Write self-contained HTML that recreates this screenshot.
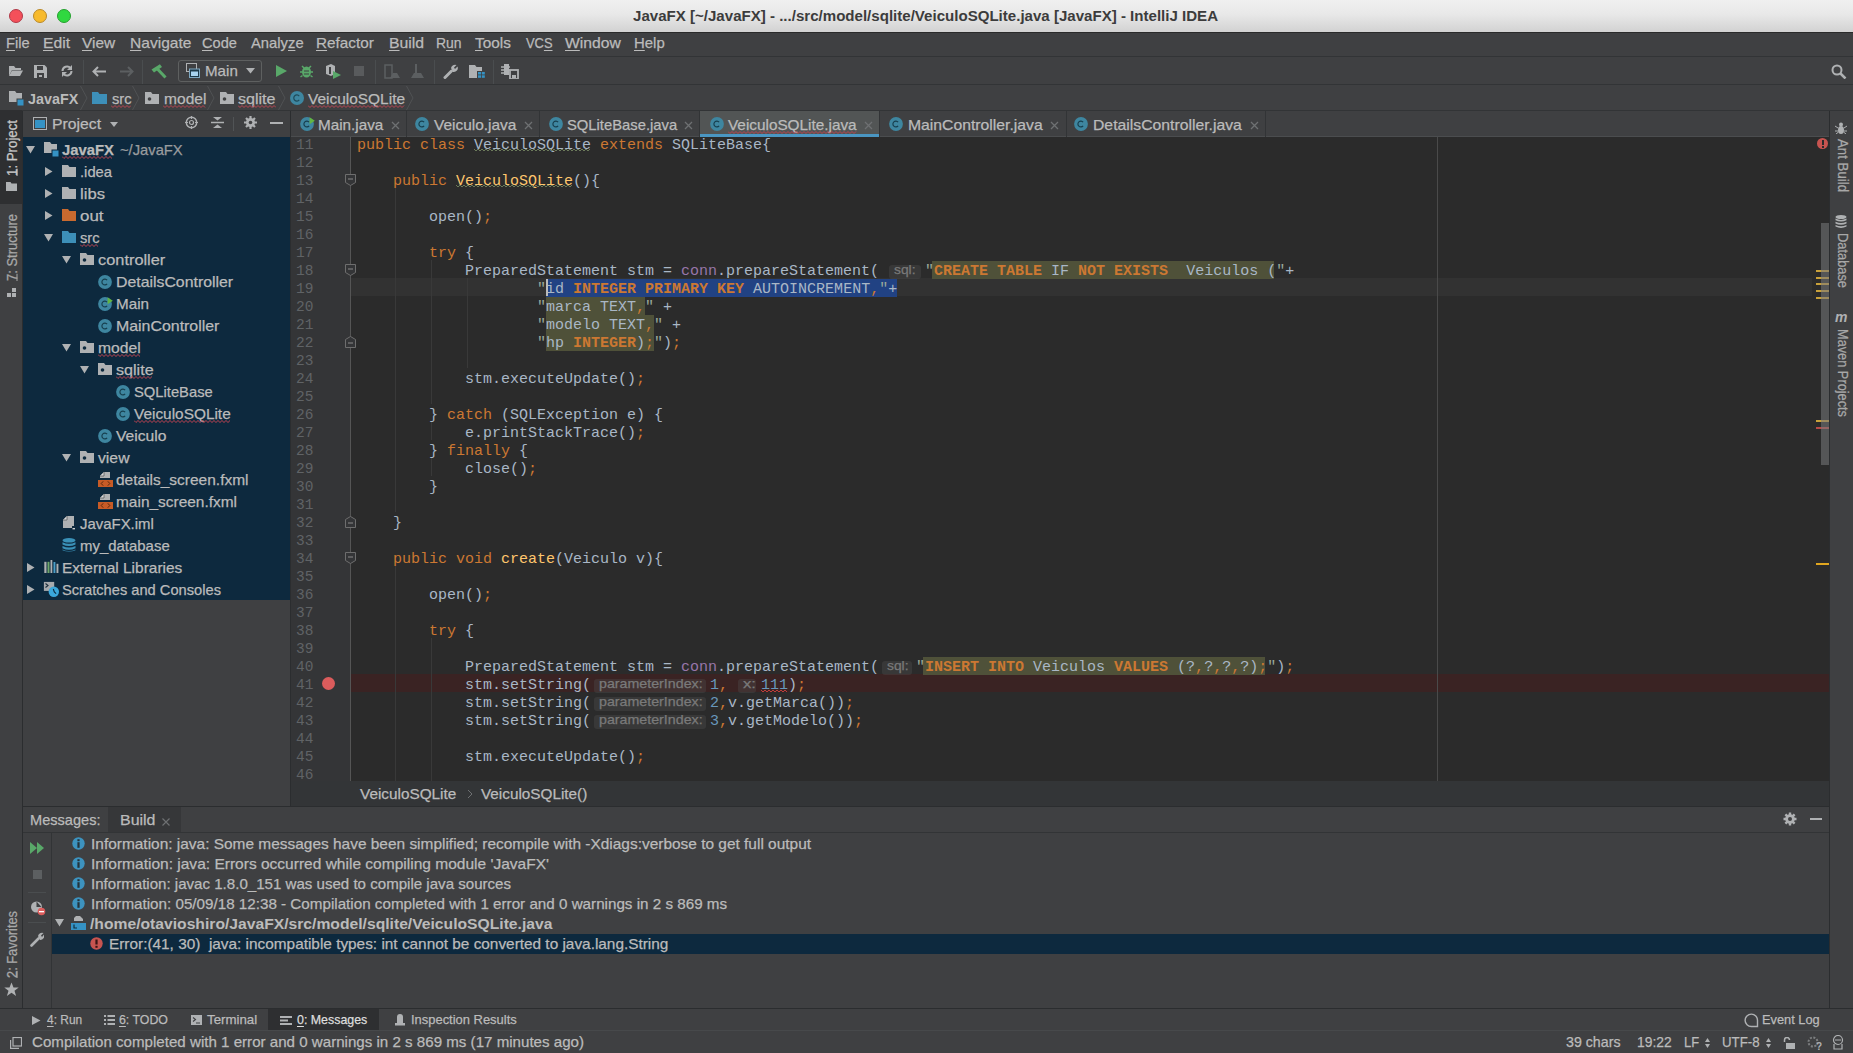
<!DOCTYPE html><html><head><meta charset="utf-8"><style>
html,body{margin:0;padding:0;width:1853px;height:1053px;overflow:hidden;background:#3F4042;}
body{position:relative;font-family:"Liberation Sans",sans-serif;}
div,span.a{position:absolute;}
.t{white-space:pre;-webkit-text-stroke:0.25px currentColor;}
.m{font-family:"Liberation Mono",monospace;white-space:pre;}
u{text-decoration:underline;text-decoration-thickness:1px;text-underline-offset:1.5px;}
.vt u{text-underline-offset:0px;}
</style></head><body>
<div style="left:0px;top:0px;width:1853px;height:1053px;background:#3F4042;"></div>
<div style="left:0;top:0;width:1853px;height:32px;background:linear-gradient(#F0F0F0,#E8E8E8 45%,#D2D2D2);"></div>
<div style="left:9px;top:8.8px;width:14px;height:14px;border-radius:50%;background:#F4505A;box-sizing:border-box;border:1px solid #B03A48;"></div>
<div style="left:33px;top:8.8px;width:14px;height:14px;border-radius:50%;background:#F7BA2C;box-sizing:border-box;border:1px solid #B9892A;"></div>
<div style="left:57px;top:8.8px;width:14px;height:14px;border-radius:50%;background:#30D840;box-sizing:border-box;border:1px solid #25A02E;"></div>
<div class="t" style="left:633px;top:6.15px;line-height:20px;font-size:14px;color:#3C3C3C;font-weight:bold;-webkit-text-stroke:0;transform:scaleX(1.0765);transform-origin:0 50%;">JavaFX [~/JavaFX] - .../src/model/sqlite/VeiculoSQLite.java [JavaFX] - IntelliJ IDEA</div>
<div style="left:0px;top:32px;width:1853px;height:1px;background:#2A2A2A;"></div>
<div style="left:0px;top:56px;width:1853px;height:1px;background:#323436;"></div>
<div style="left:0px;top:84px;width:1853px;height:1px;background:#323436;"></div>
<div style="left:0px;top:110px;width:1853px;height:1px;background:#323436;"></div>
<div class="t" style="left:6px;top:32.80px;line-height:20px;font-size:15px;color:#BBBBBB;transform:scaleX(0.9765);transform-origin:0 50%;"><u>F</u>ile</div>
<div class="t" style="left:43.3px;top:32.80px;line-height:20px;font-size:15px;color:#BBBBBB;transform:scaleX(1.0446);transform-origin:0 50%;"><u>E</u>dit</div>
<div class="t" style="left:82.3px;top:32.80px;line-height:20px;font-size:15px;color:#BBBBBB;transform:scaleX(1.0267);transform-origin:0 50%;"><u>V</u>iew</div>
<div class="t" style="left:129.5px;top:32.80px;line-height:20px;font-size:15px;color:#BBBBBB;transform:scaleX(1.0372);transform-origin:0 50%;"><u>N</u>avigate</div>
<div class="t" style="left:202px;top:32.80px;line-height:20px;font-size:15px;color:#BBBBBB;transform:scaleX(0.9733);transform-origin:0 50%;"><u>C</u>ode</div>
<div class="t" style="left:251px;top:32.80px;line-height:20px;font-size:15px;color:#BBBBBB;transform:scaleX(0.9857);transform-origin:0 50%;">Analy<u>z</u>e</div>
<div class="t" style="left:316.4px;top:32.80px;line-height:20px;font-size:15px;color:#BBBBBB;transform:scaleX(1.0197);transform-origin:0 50%;"><u>R</u>efactor</div>
<div class="t" style="left:389.2px;top:32.80px;line-height:20px;font-size:15px;color:#BBBBBB;transform:scaleX(1.0524);transform-origin:0 50%;"><u>B</u>uild</div>
<div class="t" style="left:436.4px;top:32.80px;line-height:20px;font-size:15px;color:#BBBBBB;transform:scaleX(0.9304);transform-origin:0 50%;">R<u>u</u>n</div>
<div class="t" style="left:475.3px;top:32.80px;line-height:20px;font-size:15px;color:#BBBBBB;transform:scaleX(1.0253);transform-origin:0 50%;"><u>T</u>ools</div>
<div class="t" style="left:526.2px;top:32.80px;line-height:20px;font-size:15px;color:#BBBBBB;transform:scaleX(0.8592);transform-origin:0 50%;">VC<u>S</u></div>
<div class="t" style="left:565.2px;top:32.80px;line-height:20px;font-size:15px;color:#BBBBBB;transform:scaleX(1.0460);transform-origin:0 50%;"><u>W</u>indow</div>
<div class="t" style="left:634.3px;top:32.80px;line-height:20px;font-size:15px;color:#BBBBBB;transform:scaleX(0.9952);transform-origin:0 50%;"><u>H</u>elp</div>
<svg style="position:absolute;left:8px;top:65px;" width="16" height="12" viewBox="0 0 16 12"><path d="M1 1h5l1.5 2H13v2H4L1 11z" fill="#AFB1B3"/><path d="M4 5.5h11l-3 5.5H1z" fill="#AFB1B3"/></svg>
<svg style="position:absolute;left:34px;top:65px;" width="13" height="13" viewBox="0 0 13 13"><path d="M0 0h10.5L13 2.5V13H0z" fill="#AFB1B3"/><rect x="3" y="1" width="6" height="4" fill="#3F4042"/><rect x="3" y="8" width="7" height="5" fill="#3F4042"/><rect x="5" y="10" width="3" height="2" fill="#AFB1B3"/></svg>
<svg style="position:absolute;left:60px;top:64px;" width="14" height="14" viewBox="0 0 14 14"><path d="M2.5 7a4.5 4.5 0 0 1 8-2.8" stroke="#AFB1B3" stroke-width="2" fill="none"/><path d="M12 1v5H7z" fill="#AFB1B3"/><path d="M11.5 7a4.5 4.5 0 0 1-8 2.8" stroke="#AFB1B3" stroke-width="2" fill="none"/><path d="M2 13V8h5z" fill="#AFB1B3"/></svg>
<div style="left:83px;top:60px;width:1px;height:24px;background:#4A4D4F;"></div>
<svg style="position:absolute;left:92px;top:66px;" width="15" height="11" viewBox="0 0 15 11"><path d="M6 1L1.5 5.5 6 10M1.5 5.5H14" stroke="#AFB1B3" stroke-width="2" fill="none"/></svg>
<svg style="position:absolute;left:119px;top:66px;" width="15" height="11" viewBox="0 0 15 11"><path d="M9 1l4.5 4.5L9 10M13.5 5.5H1" stroke="#5C5F61" stroke-width="2" fill="none"/></svg>
<div style="left:142px;top:60px;width:1px;height:24px;background:#4A4D4F;"></div>
<svg style="position:absolute;left:150px;top:63px;" width="17" height="17" viewBox="0 0 17 17"><path d="M1.5 6.6L9.9 1.2 12 4 4 9.5z" fill="#59A869"/><path d="M7 5.5l8.5 9" stroke="#59A869" stroke-width="3"/></svg>
<div style="left:178px;top:60px;width:84px;height:22px;border:1px solid #5E6060;border-radius:3px;box-sizing:border-box;"></div>
<svg style="position:absolute;left:186px;top:63px;" width="15" height="16" viewBox="0 0 15 16"><rect x="0.5" y="0.5" width="10" height="8" fill="none" stroke="#AFB1B3"/><rect x="3" y="5.5" width="11" height="9.5" fill="#7FA7C0"/><rect x="4" y="6.5" width="9" height="7.5" fill="#1E3A4A"/><rect x="5" y="8.5" width="7" height="4.5" fill="#A9D4F0"/></svg>
<div class="t" style="left:205.4px;top:60.80px;line-height:20px;font-size:15px;color:#BBBBBB;transform:scaleX(1.0089);transform-origin:0 50%;">Main</div>
<svg style="position:absolute;left:246px;top:68px;" width="9" height="6" viewBox="0 0 9 6"><path d="M0 0h9L4.5 5.5z" fill="#AFB1B3"/></svg>
<svg style="position:absolute;left:276px;top:65px;" width="11" height="12" viewBox="0 0 11 12"><path d="M0 0l11 6-11 6z" fill="#59A869"/></svg>
<svg style="position:absolute;left:300px;top:64px;" width="13" height="14" viewBox="0 0 13 14"><ellipse cx="6.5" cy="8" rx="4.5" ry="5.5" fill="#59A869"/><path d="M2 2l2 2M11 2L9 4M0 8h2M11 8h2M0.5 13l2-1.5M12.5 13l-2-1.5" stroke="#59A869" stroke-width="1.5"/><path d="M4 7h5M4 10h5" stroke="#3F4042" stroke-width="1.2"/></svg>
<svg style="position:absolute;left:325px;top:64px;" width="16" height="15" viewBox="0 0 16 15"><path d="M1 2l5-2 4 2v8l-4 2-5-2z" fill="#AFB1B3"/><path d="M4 3h2v7H4z" fill="#3F4042"/><path d="M8 7l8 4-8 4z" fill="#59A869"/></svg>
<div style="left:354px;top:66px;width:10px;height:10px;background:#595B5D;"></div>
<div style="left:375px;top:60px;width:1px;height:24px;background:#4A4D4F;"></div>
<svg style="position:absolute;left:384px;top:64px;" width="16" height="15" viewBox="0 0 16 15"><path d="M1 1h7v13H1z" fill="none" stroke="#5C5F61" stroke-width="1.5"/><path d="M6 14l3-5h4l3 5z" fill="#5C5F61"/></svg>
<svg style="position:absolute;left:410px;top:64px;" width="16" height="15" viewBox="0 0 16 15"><path d="M5 0h2v10H5z" fill="#5C5F61"/><path d="M1 14l3-5h7l3 5z" fill="#5C5F61"/></svg>
<div style="left:434px;top:60px;width:1px;height:24px;background:#4A4D4F;"></div>
<svg style="position:absolute;left:443px;top:64px;" width="15" height="15" viewBox="0 0 15 15"><path d="M2 13.5l6.5-6.5" stroke="#AFB1B3" stroke-width="3" stroke-linecap="round"/><path d="M8 4a4 4 0 0 1 5.5-3L11 3.5 12 5l2.5-2.5A4 4 0 0 1 10 8z" fill="#AFB1B3"/></svg>
<svg style="position:absolute;left:469px;top:65px;" width="16" height="13" viewBox="0 0 16 13"><path d="M0 0h6l1.5 2H13v4H8v7H0z" fill="#AFB1B3"/><rect x="9" y="7" width="3" height="2.5" fill="#3592C4"/><rect x="12.8" y="7" width="3" height="2.5" fill="#3592C4"/><rect x="9" y="10.3" width="3" height="2.5" fill="#3592C4"/><rect x="12.8" y="10.3" width="3" height="2.5" fill="#3592C4"/></svg>
<div style="left:493px;top:60px;width:1px;height:24px;background:#4A4D4F;"></div>
<svg style="position:absolute;left:501px;top:64px;" width="18" height="15" viewBox="0 0 18 15"><path d="M0 3h9M0 6h9M0 9h6" stroke="#AFB1B3" stroke-width="1.5"/><rect x="3" y="0" width="5" height="11" fill="#AFB1B3"/><rect x="9" y="6" width="8" height="9" fill="none" stroke="#AFB1B3" stroke-width="1.8"/><rect x="11" y="11" width="4" height="3" fill="#AFB1B3"/></svg>
<svg style="position:absolute;left:1831px;top:64px;" width="16" height="15" viewBox="0 0 16 15"><circle cx="6" cy="6" r="4.5" stroke="#AFB1B3" stroke-width="2" fill="none"/><path d="M9.5 9.5l5 5" stroke="#AFB1B3" stroke-width="2.5"/></svg>
<svg style="position:absolute;left:9px;top:91px;" width="16" height="15" viewBox="0 0 16 15"><path d="M0 0h6l1.5 2H13v9H0z" fill="#AFB1B3"/><rect x="8" y="8" width="7" height="7" fill="#3592C4" stroke="#3F4042" stroke-width="1"/></svg>
<div class="t" style="left:28.4px;top:88.80px;line-height:20px;font-size:15px;color:#BBBBBB;font-weight:bold;-webkit-text-stroke:0;transform:scaleX(0.9575);transform-origin:0 50%;">JavaFX</div>
<svg style="position:absolute;left:80px;top:86px;" width="8" height="24" viewBox="0 0 8 24"><path d="M0.5 0L7 12 0.5 24" stroke="#505254" stroke-width="1" fill="none"/></svg>
<svg style="position:absolute;left:92px;top:92px;" width="15" height="12" viewBox="0 0 15 12"><path d="M0 0h6l1.5 2H15v10H0z" fill="#3D8FB8"/></svg>
<div class="t" style="left:111.5px;top:88.80px;line-height:20px;font-size:15px;color:#BBBBBB;transform:scaleX(0.9803);transform-origin:0 50%;">src</div>
<svg style="position:absolute;left:111px;top:105px;" width="20" height="3" viewBox="0 0 20 3"><polyline points="0,0.5 2,2.5 4,0.5 6,2.5 8,0.5 10,2.5 12,0.5 14,2.5 16,0.5 18,2.5 20,0.5" stroke="#BC4452" stroke-width="1" fill="none"/></svg>
<svg style="position:absolute;left:132px;top:86px;" width="8" height="24" viewBox="0 0 8 24"><path d="M0.5 0L7 12 0.5 24" stroke="#505254" stroke-width="1" fill="none"/></svg>
<svg style="position:absolute;left:145px;top:92px;" width="14" height="12" viewBox="0 0 14 12"><path d="M0 0h6l1.5 2H14v10H0z" fill="#AFB1B3"/><circle cx="4.5" cy="7" r="1.8" fill="#3F4042"/></svg>
<div class="t" style="left:163.5px;top:88.80px;line-height:20px;font-size:15px;color:#BBBBBB;transform:scaleX(1.0379);transform-origin:0 50%;">model</div>
<svg style="position:absolute;left:163px;top:105px;" width="43" height="3" viewBox="0 0 43 3"><polyline points="0,0.5 2,2.5 4,0.5 6,2.5 8,0.5 10,2.5 12,0.5 14,2.5 16,0.5 18,2.5 20,0.5 22,2.5 24,0.5 26,2.5 28,0.5 30,2.5 32,0.5 34,2.5 36,0.5 38,2.5 40,0.5 42,2.5" stroke="#BC4452" stroke-width="1" fill="none"/></svg>
<svg style="position:absolute;left:207px;top:86px;" width="8" height="24" viewBox="0 0 8 24"><path d="M0.5 0L7 12 0.5 24" stroke="#505254" stroke-width="1" fill="none"/></svg>
<svg style="position:absolute;left:220px;top:92px;" width="14" height="12" viewBox="0 0 14 12"><path d="M0 0h6l1.5 2H14v10H0z" fill="#AFB1B3"/><circle cx="4.5" cy="7" r="1.8" fill="#3F4042"/></svg>
<div class="t" style="left:238.2px;top:88.80px;line-height:20px;font-size:15px;color:#BBBBBB;transform:scaleX(1.0710);transform-origin:0 50%;">sqlite</div>
<svg style="position:absolute;left:238px;top:105px;" width="38" height="3" viewBox="0 0 38 3"><polyline points="0,0.5 2,2.5 4,0.5 6,2.5 8,0.5 10,2.5 12,0.5 14,2.5 16,0.5 18,2.5 20,0.5 22,2.5 24,0.5 26,2.5 28,0.5 30,2.5 32,0.5 34,2.5 36,0.5 38,2.5" stroke="#BC4452" stroke-width="1" fill="none"/></svg>
<svg style="position:absolute;left:278px;top:86px;" width="8" height="24" viewBox="0 0 8 24"><path d="M0.5 0L7 12 0.5 24" stroke="#505254" stroke-width="1" fill="none"/></svg>
<svg style="position:absolute;left:290px;top:91px;" width="14" height="14" viewBox="0 0 14 14"><circle cx="7.0" cy="7.0" r="7.0" fill="#3E86A0"/><path d="M9.24 5.04A3.08 3.08 0 1 0 9.24 8.96" stroke="#1F4B5A" stroke-width="1.2" fill="none"/></svg>
<div class="t" style="left:308px;top:88.80px;line-height:20px;font-size:15px;color:#BBBBBB;transform:scaleX(1.0295);transform-origin:0 50%;">VeiculoSQLite</div>
<svg style="position:absolute;left:308px;top:105px;" width="97" height="3" viewBox="0 0 97 3"><polyline points="0,0.5 2,2.5 4,0.5 6,2.5 8,0.5 10,2.5 12,0.5 14,2.5 16,0.5 18,2.5 20,0.5 22,2.5 24,0.5 26,2.5 28,0.5 30,2.5 32,0.5 34,2.5 36,0.5 38,2.5 40,0.5 42,2.5 44,0.5 46,2.5 48,0.5 50,2.5 52,0.5 54,2.5 56,0.5 58,2.5 60,0.5 62,2.5 64,0.5 66,2.5 68,0.5 70,2.5 72,0.5 74,2.5 76,0.5 78,2.5 80,0.5 82,2.5 84,0.5 86,2.5 88,0.5 90,2.5 92,0.5 94,2.5 96,0.5" stroke="#BC4452" stroke-width="1" fill="none"/></svg>
<svg style="position:absolute;left:406px;top:86px;" width="8" height="24" viewBox="0 0 8 24"><path d="M0.5 0L7 12 0.5 24" stroke="#505254" stroke-width="1" fill="none"/></svg>
<div style="left:22px;top:111px;width:1px;height:898px;background:#2B2D2F;"></div>
<div style="left:0px;top:110px;width:22px;height:94px;background:#2E2F31;"></div>
<div class="t vt" style="left:11.5px;top:176px;font-size:14px;line-height:17px;color:#C8C8C8;transform-origin:0 0;transform:rotate(-90deg) translateY(-50%) scaleX(0.9470);"><u>1</u>: Project</div>
<svg style="position:absolute;left:6px;top:182px;" width="11" height="9" viewBox="0 0 11 9"><path d="M0 0h4.5l1 1.5H11V9H0z" fill="#AFB1B3"/></svg>
<div class="t vt" style="left:11.5px;top:281px;font-size:14px;line-height:17px;color:#A8A8A8;transform-origin:0 0;transform:rotate(-90deg) translateY(-50%) scaleX(0.9259);"><u>7</u>: Structure</div>
<svg style="position:absolute;left:7px;top:287px;" width="10" height="10" viewBox="0 0 10 10"><rect x="0" y="6" width="4" height="4" fill="#AFB1B3"/><rect x="5" y="6" width="4" height="4" fill="#AFB1B3"/><rect x="5" y="1" width="4" height="4" fill="#AFB1B3"/></svg>
<div class="t vt" style="left:11.5px;top:978px;font-size:14px;line-height:17px;color:#A8A8A8;transform-origin:0 0;transform:rotate(-90deg) translateY(-50%) scaleX(0.9161);"><u>2</u>: Favorites</div>
<svg style="position:absolute;left:4px;top:982px;" width="15" height="15" viewBox="0 0 15 15"><path d="M7.5 0.5l2 5h5.2l-4.2 3.2 1.6 5.3-4.6-3.2-4.6 3.2 1.6-5.3L0.3 5.5h5.2z" fill="#AFB1B3"/></svg>
<div style="left:1829px;top:111px;width:1px;height:898px;background:#2B2D2F;"></div>
<div class="t" style="left:1842px;top:139px;font-size:14px;line-height:17px;color:#A8A8A8;transform-origin:0 0;transform:rotate(90deg) translateY(-50%) scaleX(0.9459);">Ant Build</div>
<svg style="position:absolute;left:1835px;top:122px;" width="12" height="12" viewBox="0 0 12 12"><circle cx="6" cy="2.5" r="2" fill="#AFB1B3"/><ellipse cx="6" cy="8" rx="3" ry="4" fill="#AFB1B3"/><path d="M0 4l3 2M12 4L9 6M0 9h3M9 9h3M1 12l2.5-2M11 12l-2.5-2" stroke="#AFB1B3" stroke-width="1"/></svg>
<div class="t" style="left:1842px;top:233px;font-size:14px;line-height:17px;color:#A8A8A8;transform-origin:0 0;transform:rotate(90deg) translateY(-50%) scaleX(0.9178);">Database</div>
<svg style="position:absolute;left:1835px;top:215px;" width="12" height="14" viewBox="0 0 12 14"><ellipse cx="6" cy="2" rx="5.5" ry="2" fill="#AFB1B3"/><path d="M0.5 3.6q5.5 2.6 11 0v1.6q-5.5 2.6-11 0zM0.5 6.8q5.5 2.6 11 0v1.6q-5.5 2.6-11 0zM0.5 10q5.5 2.6 11 0v1.6q-5.5 2.6-11 0z" fill="#AFB1B3"/></svg>
<div class="t" style="left:1842px;top:329px;font-size:14px;line-height:17px;color:#A8A8A8;transform-origin:0 0;transform:rotate(90deg) translateY(-50%) scaleX(0.9121);">Maven Projects</div>
<div class="t" style="left:1835px;top:307.15px;line-height:20px;font-size:14px;color:#AFB1B3;font-weight:bold;-webkit-text-stroke:0;"><i>m</i></div>
<div style="left:23px;top:111px;width:267px;height:26px;background:#3F4042;"></div>
<svg style="position:absolute;left:33px;top:117px;" width="14" height="13" viewBox="0 0 14 13"><rect x="0.5" y="0.5" width="13" height="12" fill="none" stroke="#AFB1B3"/><rect x="2" y="3" width="10" height="8" fill="#3592C4"/></svg>
<div class="t" style="left:52px;top:114.30px;line-height:20px;font-size:15px;color:#BBBBBB;transform:scaleX(1.0496);transform-origin:0 50%;">Project</div>
<svg style="position:absolute;left:110px;top:122px;" width="8" height="5" viewBox="0 0 8 5"><path d="M0 0h8L4 5z" fill="#AFB1B3"/></svg>
<svg style="position:absolute;left:185px;top:116px;" width="13" height="13" viewBox="0 0 13 13"><circle cx="6.5" cy="6.5" r="5.2" stroke="#AFB1B3" stroke-width="1.5" fill="none"/><circle cx="6.5" cy="6.5" r="2" stroke="#AFB1B3" stroke-width="1.2" fill="none"/><path d="M6.5 0v3M6.5 10v3M0 6.5h3M10 6.5h3" stroke="#AFB1B3" stroke-width="1.2"/></svg>
<svg style="position:absolute;left:211px;top:116px;" width="13" height="13" viewBox="0 0 13 13"><path d="M2 1h9L6.5 4.5z" fill="#AFB1B3"/><path d="M0 6.5h13" stroke="#AFB1B3" stroke-width="1.5"/><path d="M2 12h9L6.5 8.5z" fill="#AFB1B3"/></svg>
<div style="left:233px;top:117px;width:1px;height:14px;background:#515456;"></div>
<svg style="position:absolute;left:244px;top:116px;" width="13" height="13" viewBox="0 0 13 13"><circle cx="6.5" cy="6.5" r="4.5" fill="#AFB1B3"/><path d="M6.5 0v13M0 6.5h13M2 2l9 9M11 2l-9 9" stroke="#AFB1B3" stroke-width="2.2"/><circle cx="6.5" cy="6.5" r="1.8" fill="#3F4042"/></svg>
<div style="left:270px;top:122px;width:13px;height:2px;background:#AFB1B3;"></div>
<div style="left:290px;top:111px;width:1px;height:695px;background:#2B2D2F;"></div>
<div style="left:23px;top:137px;width:267px;height:463px;background:#0D293E;"></div>
<svg style="position:absolute;left:26px;top:145.5px;" width="9" height="8" viewBox="0 0 9 8"><path d="M0 0h9L4.5 7.5z" fill="#AFB1B3"/></svg>
<svg style="position:absolute;left:44px;top:142px;" width="16" height="15" viewBox="0 0 16 15"><path d="M0 0h6l1.5 2H13v9H0z" fill="#AFB1B3"/><rect x="8" y="8" width="7" height="7" fill="#3592C4" stroke="#0D293E" stroke-width="1"/></svg>
<div class="t" style="left:62.3px;top:140.30px;line-height:20px;font-size:15px;color:#BBBBBB;transform:scaleX(0.9872);transform-origin:0 50%;"><b>JavaFX</b></div>
<svg style="position:absolute;left:62.3px;top:156px;" width="50.2" height="3" viewBox="0 0 50.2 3"><polyline points="0,0.5 2,2.5 4,0.5 6,2.5 8,0.5 10,2.5 12,0.5 14,2.5 16,0.5 18,2.5 20,0.5 22,2.5 24,0.5 26,2.5 28,0.5 30,2.5 32,0.5 34,2.5 36,0.5 38,2.5 40,0.5 42,2.5 44,0.5 46,2.5 48,0.5 50,2.5" stroke="#BC4452" stroke-width="1" fill="none"/></svg>
<div class="t" style="left:119.7px;top:140.30px;line-height:20px;font-size:15px;color:#9A9C9E;transform:scaleX(0.9831);transform-origin:0 50%;">~/JavaFX</div>
<svg style="position:absolute;left:45px;top:167px;" width="8" height="9" viewBox="0 0 8 9"><path d="M0 0v9L7.5 4.5z" fill="#AFB1B3"/></svg>
<svg style="position:absolute;left:62px;top:165px;" width="14" height="12" viewBox="0 0 14 12"><path d="M0 0h6l1.5 2H14v10H0z" fill="#AFB1B3"/></svg>
<div class="t" style="left:80.4px;top:162.30px;line-height:20px;font-size:15px;color:#BBBBBB;transform:scaleX(0.9839);transform-origin:0 50%;">.idea</div>
<svg style="position:absolute;left:45px;top:189px;" width="8" height="9" viewBox="0 0 8 9"><path d="M0 0v9L7.5 4.5z" fill="#AFB1B3"/></svg>
<svg style="position:absolute;left:62px;top:187px;" width="14" height="12" viewBox="0 0 14 12"><path d="M0 0h6l1.5 2H14v10H0z" fill="#AFB1B3"/></svg>
<div class="t" style="left:80.4px;top:184.30px;line-height:20px;font-size:15px;color:#BBBBBB;transform:scaleX(1.1108);transform-origin:0 50%;">libs</div>
<svg style="position:absolute;left:45px;top:211px;" width="8" height="9" viewBox="0 0 8 9"><path d="M0 0v9L7.5 4.5z" fill="#AFB1B3"/></svg>
<svg style="position:absolute;left:62px;top:209px;" width="14" height="12" viewBox="0 0 14 12"><path d="M0 0h6l1.5 2H14v10H0z" fill="#C96A2F"/></svg>
<div class="t" style="left:80.4px;top:206.30px;line-height:20px;font-size:15px;color:#BBBBBB;transform:scaleX(1.1271);transform-origin:0 50%;">out</div>
<svg style="position:absolute;left:44px;top:233.5px;" width="9" height="8" viewBox="0 0 9 8"><path d="M0 0h9L4.5 7.5z" fill="#AFB1B3"/></svg>
<svg style="position:absolute;left:62px;top:231px;" width="14" height="12" viewBox="0 0 14 12"><path d="M0 0h6l1.5 2H14v10H0z" fill="#3D8FB8"/></svg>
<div class="t" style="left:80.4px;top:228.30px;line-height:20px;font-size:15px;color:#BBBBBB;transform:scaleX(0.9803);transform-origin:0 50%;">src</div>
<svg style="position:absolute;left:80.4px;top:244px;" width="19.599999999999994" height="3" viewBox="0 0 19.599999999999994 3"><polyline points="0,0.5 2,2.5 4,0.5 6,2.5 8,0.5 10,2.5 12,0.5 14,2.5 16,0.5 18,2.5" stroke="#BC4452" stroke-width="1" fill="none"/></svg>
<svg style="position:absolute;left:62px;top:255.5px;" width="9" height="8" viewBox="0 0 9 8"><path d="M0 0h9L4.5 7.5z" fill="#AFB1B3"/></svg>
<svg style="position:absolute;left:80px;top:253px;" width="14" height="12" viewBox="0 0 14 12"><path d="M0 0h6l1.5 2H14v10H0z" fill="#AFB1B3"/><circle cx="4.5" cy="7" r="1.8" fill="#0D293E"/></svg>
<div class="t" style="left:98.3px;top:250.30px;line-height:20px;font-size:15px;color:#BBBBBB;transform:scaleX(1.0910);transform-origin:0 50%;">controller</div>
<svg style="position:absolute;left:98px;top:274.7px;" width="15" height="14" viewBox="0 0 15 14"><circle cx="7" cy="7" r="6.9" fill="#3E86A0"/><path d="M9.1 5.2A2.9 2.9 0 1 0 9.1 8.8" stroke="#173F4E" stroke-width="1.2" fill="none"/></svg>
<div class="t" style="left:116.2px;top:272.30px;line-height:20px;font-size:15px;color:#BBBBBB;transform:scaleX(1.0562);transform-origin:0 50%;">DetailsController</div>
<svg style="position:absolute;left:98px;top:296.7px;" width="15" height="14" viewBox="0 0 15 14"><circle cx="7" cy="7" r="6.9" fill="#3E86A0"/><path d="M9.1 5.2A2.9 2.9 0 1 0 9.1 8.8" stroke="#173F4E" stroke-width="1.2" fill="none"/><path d="M9.6 0.3l5.2 3.4-5.2 3.6z" fill="#62B543"/></svg>
<div class="t" style="left:116.2px;top:294.30px;line-height:20px;font-size:15px;color:#BBBBBB;transform:scaleX(1.0151);transform-origin:0 50%;">Main</div>
<svg style="position:absolute;left:98px;top:318.7px;" width="15" height="14" viewBox="0 0 15 14"><circle cx="7" cy="7" r="6.9" fill="#3E86A0"/><path d="M9.1 5.2A2.9 2.9 0 1 0 9.1 8.8" stroke="#173F4E" stroke-width="1.2" fill="none"/></svg>
<div class="t" style="left:116.2px;top:316.30px;line-height:20px;font-size:15px;color:#BBBBBB;transform:scaleX(1.0602);transform-origin:0 50%;">MainController</div>
<svg style="position:absolute;left:62px;top:343.5px;" width="9" height="8" viewBox="0 0 9 8"><path d="M0 0h9L4.5 7.5z" fill="#AFB1B3"/></svg>
<svg style="position:absolute;left:80px;top:341px;" width="14" height="12" viewBox="0 0 14 12"><path d="M0 0h6l1.5 2H14v10H0z" fill="#AFB1B3"/><circle cx="4.5" cy="7" r="1.8" fill="#0D293E"/></svg>
<div class="t" style="left:98.3px;top:338.30px;line-height:20px;font-size:15px;color:#BBBBBB;transform:scaleX(1.0452);transform-origin:0 50%;">model</div>
<svg style="position:absolute;left:98.3px;top:354px;" width="42.7" height="3" viewBox="0 0 42.7 3"><polyline points="0,0.5 2,2.5 4,0.5 6,2.5 8,0.5 10,2.5 12,0.5 14,2.5 16,0.5 18,2.5 20,0.5 22,2.5 24,0.5 26,2.5 28,0.5 30,2.5 32,0.5 34,2.5 36,0.5 38,2.5 40,0.5 42,2.5" stroke="#BC4452" stroke-width="1" fill="none"/></svg>
<svg style="position:absolute;left:80px;top:365.5px;" width="9" height="8" viewBox="0 0 9 8"><path d="M0 0h9L4.5 7.5z" fill="#AFB1B3"/></svg>
<svg style="position:absolute;left:98px;top:363px;" width="14" height="12" viewBox="0 0 14 12"><path d="M0 0h6l1.5 2H14v10H0z" fill="#AFB1B3"/><circle cx="4.5" cy="7" r="1.8" fill="#0D293E"/></svg>
<div class="t" style="left:116.2px;top:360.30px;line-height:20px;font-size:15px;color:#BBBBBB;transform:scaleX(1.0738);transform-origin:0 50%;">sqlite</div>
<svg style="position:absolute;left:116.2px;top:376px;" width="37.60000000000001" height="3" viewBox="0 0 37.60000000000001 3"><polyline points="0,0.5 2,2.5 4,0.5 6,2.5 8,0.5 10,2.5 12,0.5 14,2.5 16,0.5 18,2.5 20,0.5 22,2.5 24,0.5 26,2.5 28,0.5 30,2.5 32,0.5 34,2.5 36,0.5" stroke="#BC4452" stroke-width="1" fill="none"/></svg>
<svg style="position:absolute;left:116px;top:384.7px;" width="15" height="14" viewBox="0 0 15 14"><circle cx="7" cy="7" r="6.9" fill="#3E86A0"/><path d="M9.1 5.2A2.9 2.9 0 1 0 9.1 8.8" stroke="#173F4E" stroke-width="1.2" fill="none"/></svg>
<div class="t" style="left:134.1px;top:382.30px;line-height:20px;font-size:15px;color:#BBBBBB;transform:scaleX(0.9832);transform-origin:0 50%;">SQLiteBase</div>
<svg style="position:absolute;left:116px;top:406.7px;" width="15" height="14" viewBox="0 0 15 14"><circle cx="7" cy="7" r="6.9" fill="#3E86A0"/><path d="M9.1 5.2A2.9 2.9 0 1 0 9.1 8.8" stroke="#173F4E" stroke-width="1.2" fill="none"/></svg>
<div class="t" style="left:134.1px;top:404.30px;line-height:20px;font-size:15px;color:#BBBBBB;transform:scaleX(1.0263);transform-origin:0 50%;">VeiculoSQLite</div>
<svg style="position:absolute;left:134.1px;top:420px;" width="96.70000000000002" height="3" viewBox="0 0 96.70000000000002 3"><polyline points="0,0.5 2,2.5 4,0.5 6,2.5 8,0.5 10,2.5 12,0.5 14,2.5 16,0.5 18,2.5 20,0.5 22,2.5 24,0.5 26,2.5 28,0.5 30,2.5 32,0.5 34,2.5 36,0.5 38,2.5 40,0.5 42,2.5 44,0.5 46,2.5 48,0.5 50,2.5 52,0.5 54,2.5 56,0.5 58,2.5 60,0.5 62,2.5 64,0.5 66,2.5 68,0.5 70,2.5 72,0.5 74,2.5 76,0.5 78,2.5 80,0.5 82,2.5 84,0.5 86,2.5 88,0.5 90,2.5 92,0.5 94,2.5 96,0.5" stroke="#BC4452" stroke-width="1" fill="none"/></svg>
<svg style="position:absolute;left:98px;top:428.7px;" width="15" height="14" viewBox="0 0 15 14"><circle cx="7" cy="7" r="6.9" fill="#3E86A0"/><path d="M9.1 5.2A2.9 2.9 0 1 0 9.1 8.8" stroke="#173F4E" stroke-width="1.2" fill="none"/></svg>
<div class="t" style="left:116.2px;top:426.30px;line-height:20px;font-size:15px;color:#BBBBBB;transform:scaleX(1.0441);transform-origin:0 50%;">Veiculo</div>
<svg style="position:absolute;left:62px;top:453.5px;" width="9" height="8" viewBox="0 0 9 8"><path d="M0 0h9L4.5 7.5z" fill="#AFB1B3"/></svg>
<svg style="position:absolute;left:80px;top:451px;" width="14" height="12" viewBox="0 0 14 12"><path d="M0 0h6l1.5 2H14v10H0z" fill="#AFB1B3"/><circle cx="4.5" cy="7" r="1.8" fill="#0D293E"/></svg>
<div class="t" style="left:98px;top:448.30px;line-height:20px;font-size:15px;color:#BBBBBB;transform:scaleX(1.0498);transform-origin:0 50%;">view</div>
<svg style="position:absolute;left:98px;top:471px;" width="15" height="16" viewBox="0 0 15 16"><path d="M6 1h6v6H2V5z" fill="#AFB1B3"/><path d="M6 1v4H2z" fill="#D8D8D8"/><path d="M6 1v4H2" stroke="#5A5D60" stroke-width="0.8" fill="none"/><rect x="0" y="9" width="15" height="7" fill="#C75B26"/><path d="M5.2 10.3L3.2 12.5 5.2 14.7M9.8 10.3l2 2.2-2 2.2" stroke="#5A2A10" stroke-width="1" fill="none"/></svg>
<div class="t" style="left:116.2px;top:470.30px;line-height:20px;font-size:15px;color:#BBBBBB;transform:scaleX(1.0321);transform-origin:0 50%;">details_screen.fxml</div>
<svg style="position:absolute;left:98px;top:493px;" width="15" height="16" viewBox="0 0 15 16"><path d="M6 1h6v6H2V5z" fill="#AFB1B3"/><path d="M6 1v4H2z" fill="#D8D8D8"/><path d="M6 1v4H2" stroke="#5A5D60" stroke-width="0.8" fill="none"/><rect x="0" y="9" width="15" height="7" fill="#C75B26"/><path d="M5.2 10.3L3.2 12.5 5.2 14.7M9.8 10.3l2 2.2-2 2.2" stroke="#5A2A10" stroke-width="1" fill="none"/></svg>
<div class="t" style="left:116.2px;top:492.30px;line-height:20px;font-size:15px;color:#BBBBBB;transform:scaleX(1.0295);transform-origin:0 50%;">main_screen.fxml</div>
<svg style="position:absolute;left:63px;top:516px;" width="12" height="14" viewBox="0 0 12 14"><path d="M4 0h7v10H9v2H0V4z" fill="#AFB1B3"/><path d="M4 0v4H0z" fill="#D8D8D8"/><path d="M4 0v4H0" stroke="#5A5D60" stroke-width="0.8" fill="none"/><rect x="9.5" y="12" width="2.5" height="1.4" fill="#D0D0D0"/></svg>
<div class="t" style="left:80px;top:514.30px;line-height:20px;font-size:15px;color:#BBBBBB;transform:scaleX(0.9949);transform-origin:0 50%;">JavaFX.iml</div>
<svg style="position:absolute;left:62px;top:538px;" width="14" height="14" viewBox="0 0 14 14"><ellipse cx="7" cy="2.3" rx="6.5" ry="2.3" fill="#3A91B8"/><path d="M0.5 4.2q6.5 3 13 0v2.2q-6.5 3-13 0zM0.5 8q6.5 3 13 0v2.2q-6.5 3-13 0zM0.5 11.6q6.5 3 13 0v0.6q-6.5 2.4-13 0z" fill="#3A91B8"/></svg>
<div class="t" style="left:80px;top:536.30px;line-height:20px;font-size:15px;color:#BBBBBB;transform:scaleX(0.9961);transform-origin:0 50%;">my_database</div>
<svg style="position:absolute;left:27px;top:563px;" width="8" height="9" viewBox="0 0 8 9"><path d="M0 0v9L7.5 4.5z" fill="#AFB1B3"/></svg>
<svg style="position:absolute;left:43.6px;top:560px;" width="15" height="14" viewBox="0 0 15 14"><rect x="0.3" y="1.8" width="2.2" height="11.2" fill="#AFB1B3"/><rect x="3.5" y="1.8" width="2" height="11.2" fill="#6FA66A"/><rect x="6.5" y="0" width="1.8" height="13" fill="#AFB1B3"/><rect x="9.5" y="2" width="1.9" height="11" fill="#4A9FC9"/><rect x="12.5" y="3.8" width="1.9" height="9.2" fill="#AFB1B3"/></svg>
<div class="t" style="left:62.3px;top:558.30px;line-height:20px;font-size:15px;color:#BBBBBB;transform:scaleX(1.0307);transform-origin:0 50%;">External Libraries</div>
<svg style="position:absolute;left:27px;top:585px;" width="8" height="9" viewBox="0 0 8 9"><path d="M0 0v9L7.5 4.5z" fill="#AFB1B3"/></svg>
<svg style="position:absolute;left:43px;top:581px;" width="17" height="19" viewBox="0 0 17 19"><rect x="0.9" y="0.9" width="10.3" height="9" fill="#A7AAAD"/><path d="M2.5 2.5l2.5 2-2.5 2" stroke="#1E2E3A" stroke-width="1.1" fill="none"/><circle cx="10.8" cy="10.8" r="5.2" fill="#3BA7DA"/><path d="M10.3 8l1 3 1.8 1.6" stroke="#0D293E" stroke-width="1.1" fill="none"/></svg>
<div class="t" style="left:62.3px;top:580.30px;line-height:20px;font-size:15px;color:#BBBBBB;transform:scaleX(0.9780);transform-origin:0 50%;">Scratches and Consoles</div>
<div style="left:291px;top:111px;width:1538px;height:26px;background:#3F4042;"></div>
<div style="left:291px;top:136px;width:1538px;height:1px;background:#4B4D4F;"></div>
<div style="left:700px;top:111px;width:179px;height:26px;background:#525555;"></div>
<div style="left:700px;top:134px;width:179px;height:3px;background:#4A96C2;"></div>
<div style="left:406px;top:111px;width:1px;height:26px;background:#323436;"></div>
<div style="left:539px;top:111px;width:1px;height:26px;background:#323436;"></div>
<div style="left:699px;top:111px;width:1px;height:26px;background:#323436;"></div>
<div style="left:879px;top:111px;width:1px;height:26px;background:#323436;"></div>
<div style="left:1066px;top:111px;width:1px;height:26px;background:#323436;"></div>
<div style="left:1265px;top:111px;width:1px;height:26px;background:#323436;"></div>
<svg style="position:absolute;left:300px;top:117px;" width="15" height="14" viewBox="0 0 15 14"><circle cx="7" cy="7" r="6.9" fill="#3E86A0"/><path d="M9.1 5.2A2.9 2.9 0 1 0 9.1 8.8" stroke="#173F4E" stroke-width="1.2" fill="none"/><path d="M9.6 0.3l5.2 3.4-5.2 3.6z" fill="#62B543"/></svg>
<div class="t" style="left:318px;top:115.30px;line-height:20px;font-size:15px;color:#BBBBBB;transform:scaleX(1.0172);transform-origin:0 50%;">Main.java</div>
<svg style="position:absolute;left:391px;top:120.5px;" width="9" height="9" viewBox="0 0 9 9"><path d="M1 1l7 7M8 1L1 8" stroke="#6E7072" stroke-width="1.3"/></svg>
<svg style="position:absolute;left:415px;top:117px;" width="15" height="14" viewBox="0 0 15 14"><circle cx="7" cy="7" r="6.9" fill="#3E86A0"/><path d="M9.1 5.2A2.9 2.9 0 1 0 9.1 8.8" stroke="#173F4E" stroke-width="1.2" fill="none"/></svg>
<div class="t" style="left:433.9px;top:115.30px;line-height:20px;font-size:15px;color:#BBBBBB;transform:scaleX(1.0293);transform-origin:0 50%;">Veiculo.java</div>
<svg style="position:absolute;left:524px;top:120.5px;" width="9" height="9" viewBox="0 0 9 9"><path d="M1 1l7 7M8 1L1 8" stroke="#6E7072" stroke-width="1.3"/></svg>
<svg style="position:absolute;left:549px;top:117px;" width="15" height="14" viewBox="0 0 15 14"><circle cx="7" cy="7" r="6.9" fill="#3E86A0"/><path d="M9.1 5.2A2.9 2.9 0 1 0 9.1 8.8" stroke="#173F4E" stroke-width="1.2" fill="none"/></svg>
<div class="t" style="left:566.9px;top:115.30px;line-height:20px;font-size:15px;color:#BBBBBB;transform:scaleX(0.9854);transform-origin:0 50%;">SQLiteBase.java</div>
<svg style="position:absolute;left:684px;top:120.5px;" width="9" height="9" viewBox="0 0 9 9"><path d="M1 1l7 7M8 1L1 8" stroke="#6E7072" stroke-width="1.3"/></svg>
<svg style="position:absolute;left:710px;top:117px;" width="15" height="14" viewBox="0 0 15 14"><circle cx="7" cy="7" r="6.9" fill="#3E86A0"/><path d="M9.1 5.2A2.9 2.9 0 1 0 9.1 8.8" stroke="#173F4E" stroke-width="1.2" fill="none"/></svg>
<div class="t" style="left:728.2px;top:115.30px;line-height:20px;font-size:15px;color:#BBBBBB;transform:scaleX(1.0214);transform-origin:0 50%;">VeiculoSQLite.java</div>
<svg style="position:absolute;left:864px;top:120.5px;" width="9" height="9" viewBox="0 0 9 9"><path d="M1 1l7 7M8 1L1 8" stroke="#6E7072" stroke-width="1.3"/></svg>
<svg style="position:absolute;left:889px;top:117px;" width="15" height="14" viewBox="0 0 15 14"><circle cx="7" cy="7" r="6.9" fill="#3E86A0"/><path d="M9.1 5.2A2.9 2.9 0 1 0 9.1 8.8" stroke="#173F4E" stroke-width="1.2" fill="none"/></svg>
<div class="t" style="left:907.6px;top:115.30px;line-height:20px;font-size:15px;color:#BBBBBB;transform:scaleX(1.0492);transform-origin:0 50%;">MainController.java</div>
<svg style="position:absolute;left:1050px;top:120.5px;" width="9" height="9" viewBox="0 0 9 9"><path d="M1 1l7 7M8 1L1 8" stroke="#6E7072" stroke-width="1.3"/></svg>
<svg style="position:absolute;left:1074px;top:117px;" width="15" height="14" viewBox="0 0 15 14"><circle cx="7" cy="7" r="6.9" fill="#3E86A0"/><path d="M9.1 5.2A2.9 2.9 0 1 0 9.1 8.8" stroke="#173F4E" stroke-width="1.2" fill="none"/></svg>
<div class="t" style="left:1093.2px;top:115.30px;line-height:20px;font-size:15px;color:#BBBBBB;transform:scaleX(1.0499);transform-origin:0 50%;">DetailsController.java</div>
<svg style="position:absolute;left:1250px;top:120.5px;" width="9" height="9" viewBox="0 0 9 9"><path d="M1 1l7 7M8 1L1 8" stroke="#6E7072" stroke-width="1.3"/></svg>
<svg style="position:absolute;left:728px;top:131px;" width="129" height="3" viewBox="0 0 129 3"><polyline points="0,0.5 2,2.5 4,0.5 6,2.5 8,0.5 10,2.5 12,0.5 14,2.5 16,0.5 18,2.5 20,0.5 22,2.5 24,0.5 26,2.5 28,0.5 30,2.5 32,0.5 34,2.5 36,0.5 38,2.5 40,0.5 42,2.5 44,0.5 46,2.5 48,0.5 50,2.5 52,0.5 54,2.5 56,0.5 58,2.5 60,0.5 62,2.5 64,0.5 66,2.5 68,0.5 70,2.5 72,0.5 74,2.5 76,0.5 78,2.5 80,0.5 82,2.5 84,0.5 86,2.5 88,0.5 90,2.5 92,0.5 94,2.5 96,0.5 98,2.5 100,0.5 102,2.5 104,0.5 106,2.5 108,0.5 110,2.5 112,0.5 114,2.5 116,0.5 118,2.5 120,0.5 122,2.5 124,0.5 126,2.5 128,0.5" stroke="#BC4452" stroke-width="1" fill="none"/></svg>
<div style="left:291px;top:137px;width:1538px;height:644px;background:#2B2B2B;"></div>
<div style="left:291px;top:137px;width:60px;height:644px;background:#343537;"></div>
<div style="left:351px;top:278px;width:1461px;height:18px;background:#323232;"></div>
<div style="left:351px;top:674px;width:1478px;height:18px;background:#3A2323;"></div>
<div style="left:1437px;top:137px;width:1px;height:644px;background:#4A4A4A;"></div>
<div style="left:350px;top:137px;width:1px;height:644px;background:#555555;"></div>
<div class="m" style="left:291px;top:136px;width:22.5px;text-align:right;font-size:14.5px;line-height:18px;color:#606366;">11</div>
<div class="m" style="left:291px;top:154px;width:22.5px;text-align:right;font-size:14.5px;line-height:18px;color:#606366;">12</div>
<div class="m" style="left:291px;top:172px;width:22.5px;text-align:right;font-size:14.5px;line-height:18px;color:#606366;">13</div>
<div class="m" style="left:291px;top:190px;width:22.5px;text-align:right;font-size:14.5px;line-height:18px;color:#606366;">14</div>
<div class="m" style="left:291px;top:208px;width:22.5px;text-align:right;font-size:14.5px;line-height:18px;color:#606366;">15</div>
<div class="m" style="left:291px;top:226px;width:22.5px;text-align:right;font-size:14.5px;line-height:18px;color:#606366;">16</div>
<div class="m" style="left:291px;top:244px;width:22.5px;text-align:right;font-size:14.5px;line-height:18px;color:#606366;">17</div>
<div class="m" style="left:291px;top:262px;width:22.5px;text-align:right;font-size:14.5px;line-height:18px;color:#606366;">18</div>
<div class="m" style="left:291px;top:280px;width:22.5px;text-align:right;font-size:14.5px;line-height:18px;color:#606366;">19</div>
<div class="m" style="left:291px;top:298px;width:22.5px;text-align:right;font-size:14.5px;line-height:18px;color:#606366;">20</div>
<div class="m" style="left:291px;top:316px;width:22.5px;text-align:right;font-size:14.5px;line-height:18px;color:#606366;">21</div>
<div class="m" style="left:291px;top:334px;width:22.5px;text-align:right;font-size:14.5px;line-height:18px;color:#606366;">22</div>
<div class="m" style="left:291px;top:352px;width:22.5px;text-align:right;font-size:14.5px;line-height:18px;color:#606366;">23</div>
<div class="m" style="left:291px;top:370px;width:22.5px;text-align:right;font-size:14.5px;line-height:18px;color:#606366;">24</div>
<div class="m" style="left:291px;top:388px;width:22.5px;text-align:right;font-size:14.5px;line-height:18px;color:#606366;">25</div>
<div class="m" style="left:291px;top:406px;width:22.5px;text-align:right;font-size:14.5px;line-height:18px;color:#606366;">26</div>
<div class="m" style="left:291px;top:424px;width:22.5px;text-align:right;font-size:14.5px;line-height:18px;color:#606366;">27</div>
<div class="m" style="left:291px;top:442px;width:22.5px;text-align:right;font-size:14.5px;line-height:18px;color:#606366;">28</div>
<div class="m" style="left:291px;top:460px;width:22.5px;text-align:right;font-size:14.5px;line-height:18px;color:#606366;">29</div>
<div class="m" style="left:291px;top:478px;width:22.5px;text-align:right;font-size:14.5px;line-height:18px;color:#606366;">30</div>
<div class="m" style="left:291px;top:496px;width:22.5px;text-align:right;font-size:14.5px;line-height:18px;color:#606366;">31</div>
<div class="m" style="left:291px;top:514px;width:22.5px;text-align:right;font-size:14.5px;line-height:18px;color:#606366;">32</div>
<div class="m" style="left:291px;top:532px;width:22.5px;text-align:right;font-size:14.5px;line-height:18px;color:#606366;">33</div>
<div class="m" style="left:291px;top:550px;width:22.5px;text-align:right;font-size:14.5px;line-height:18px;color:#606366;">34</div>
<div class="m" style="left:291px;top:568px;width:22.5px;text-align:right;font-size:14.5px;line-height:18px;color:#606366;">35</div>
<div class="m" style="left:291px;top:586px;width:22.5px;text-align:right;font-size:14.5px;line-height:18px;color:#606366;">36</div>
<div class="m" style="left:291px;top:604px;width:22.5px;text-align:right;font-size:14.5px;line-height:18px;color:#606366;">37</div>
<div class="m" style="left:291px;top:622px;width:22.5px;text-align:right;font-size:14.5px;line-height:18px;color:#606366;">38</div>
<div class="m" style="left:291px;top:640px;width:22.5px;text-align:right;font-size:14.5px;line-height:18px;color:#606366;">39</div>
<div class="m" style="left:291px;top:658px;width:22.5px;text-align:right;font-size:14.5px;line-height:18px;color:#606366;">40</div>
<div class="m" style="left:291px;top:676px;width:22.5px;text-align:right;font-size:14.5px;line-height:18px;color:#606366;">41</div>
<div class="m" style="left:291px;top:694px;width:22.5px;text-align:right;font-size:14.5px;line-height:18px;color:#606366;">42</div>
<div class="m" style="left:291px;top:712px;width:22.5px;text-align:right;font-size:14.5px;line-height:18px;color:#606366;">43</div>
<div class="m" style="left:291px;top:730px;width:22.5px;text-align:right;font-size:14.5px;line-height:18px;color:#606366;">44</div>
<div class="m" style="left:291px;top:748px;width:22.5px;text-align:right;font-size:14.5px;line-height:18px;color:#606366;">45</div>
<div class="m" style="left:291px;top:766px;width:22.5px;text-align:right;font-size:14.5px;line-height:18px;color:#606366;">46</div>
<svg style="position:absolute;left:345px;top:174px;" width="11" height="12" viewBox="0 0 11 12"><path d="M0.5 0.5H10.5V8.5L5.5 11.5 0.5 8.5z" fill="#343537" stroke="#6E6E6E"/><path d="M3 5h5" stroke="#8A8A8A"/></svg>
<svg style="position:absolute;left:345px;top:264px;" width="11" height="12" viewBox="0 0 11 12"><path d="M0.5 0.5H10.5V8.5L5.5 11.5 0.5 8.5z" fill="#343537" stroke="#6E6E6E"/><path d="M3 5h5" stroke="#8A8A8A"/></svg>
<svg style="position:absolute;left:345px;top:336px;" width="11" height="12" viewBox="0 0 11 12"><path d="M0.5 3.5L5.5 0.5 10.5 3.5V11.5H0.5z" fill="#343537" stroke="#6E6E6E"/><path d="M3 7h5" stroke="#8A8A8A"/></svg>
<svg style="position:absolute;left:345px;top:516px;" width="11" height="12" viewBox="0 0 11 12"><path d="M0.5 3.5L5.5 0.5 10.5 3.5V11.5H0.5z" fill="#343537" stroke="#6E6E6E"/><path d="M3 7h5" stroke="#8A8A8A"/></svg>
<svg style="position:absolute;left:345px;top:552px;" width="11" height="12" viewBox="0 0 11 12"><path d="M0.5 0.5H10.5V8.5L5.5 11.5 0.5 8.5z" fill="#343537" stroke="#6E6E6E"/><path d="M3 5h5" stroke="#8A8A8A"/></svg>
<div style="left:322px;top:677px;width:13px;height:13px;border-radius:50%;background:#DB5C5C;"></div>
<div style="left:395px;top:188px;width:1px;height:324px;background:#393939;"></div>
<div style="left:431px;top:260px;width:1px;height:144px;background:#393939;"></div>
<div style="left:467px;top:278px;width:1px;height:90px;background:#393939;"></div>
<div style="left:431px;top:422px;width:1px;height:18px;background:#393939;"></div>
<div style="left:431px;top:458px;width:1px;height:18px;background:#393939;"></div>
<div style="left:395px;top:566px;width:1px;height:216px;background:#393939;"></div>
<div style="left:431px;top:638px;width:1px;height:144px;background:#393939;"></div>
<div style="left:932px;top:261px;width:342px;height:18px;background:#4F5139;"></div>
<div style="left:546px;top:279px;width:351px;height:18px;background:#214283;"></div>
<div style="left:546px;top:297px;width:99px;height:18px;background:#4F5139;"></div>
<div style="left:546px;top:315px;width:108px;height:18px;background:#4F5139;"></div>
<div style="left:546px;top:333px;width:108px;height:18px;background:#4F5139;"></div>
<div style="left:923px;top:657px;width:342px;height:18px;background:#4F5139;"></div>
<div class="m" style="left:357px;top:137px;font-size:15px;line-height:18px;"><span style="color:#CC7832;">public</span><span style="color:#A9B7C6;"> </span><span style="color:#CC7832;">class</span><span style="color:#A9B7C6;"> VeiculoSQLite </span><span style="color:#CC7832;">extends</span><span style="color:#A9B7C6;"> SQLiteBase{</span></div>
<svg style="position:absolute;left:474px;top:149px;" width="117" height="3" viewBox="0 0 117 3"><polyline points="0,0 2,2 4,0 6,2 8,0 10,2 12,0 14,2 16,0 18,2 20,0 22,2 24,0 26,2 28,0 30,2 32,0 34,2 36,0 38,2 40,0 42,2 44,0 46,2 48,0 50,2 52,0 54,2 56,0 58,2 60,0 62,2 64,0 66,2 68,0 70,2 72,0 74,2 76,0 78,2 80,0 82,2 84,0 86,2 88,0 90,2 92,0 94,2 96,0 98,2 100,0 102,2 104,0 106,2 108,0 110,2 112,0 114,2 116,0" stroke="#6B7A5A" stroke-width="1" fill="none"/></svg>
<div class="m" style="left:393px;top:173px;font-size:15px;line-height:18px;"><span style="color:#CC7832;">public</span><span style="color:#A9B7C6;"> </span><span style="color:#FFC66D;">VeiculoSQLite</span><span style="color:#A9B7C6;">(){</span></div>
<svg style="position:absolute;left:456px;top:185px;" width="117" height="3" viewBox="0 0 117 3"><polyline points="0,0 2,2 4,0 6,2 8,0 10,2 12,0 14,2 16,0 18,2 20,0 22,2 24,0 26,2 28,0 30,2 32,0 34,2 36,0 38,2 40,0 42,2 44,0 46,2 48,0 50,2 52,0 54,2 56,0 58,2 60,0 62,2 64,0 66,2 68,0 70,2 72,0 74,2 76,0 78,2 80,0 82,2 84,0 86,2 88,0 90,2 92,0 94,2 96,0 98,2 100,0 102,2 104,0 106,2 108,0 110,2 112,0 114,2 116,0" stroke="#6B7A5A" stroke-width="1" fill="none"/></svg>
<div class="m" style="left:429px;top:209px;font-size:15px;line-height:18px;"><span style="color:#A9B7C6;">open()</span><span style="color:#CC7832;">;</span></div>
<div class="m" style="left:429px;top:245px;font-size:15px;line-height:18px;"><span style="color:#CC7832;">try</span><span style="color:#A9B7C6;"> {</span></div>
<div class="m" style="left:465px;top:263px;font-size:15px;line-height:18px;"><span style="color:#A9B7C6;">PreparedStatement stm = </span><span style="color:#9876AA;">conn</span><span style="color:#A9B7C6;">.prepareStatement( </span></div>
<div style="left:889px;top:265px;width:32px;height:14px;background:rgba(80,80,80,0.35);border-radius:3px;"></div>
<div class="t" style="left:893.5px;top:262.00px;line-height:16px;font-size:13px;color:#7A7A7A;transform:scaleX(1.0628);transform-origin:0 50%;">sql:</div>
<div class="m" style="left:925px;top:263px;font-size:15px;line-height:18px;"><span style="color:#9AA89A;">&quot;</span><span style="color:#CC7832;font-weight:bold;">CREATE</span><span style="color:#A9B7C6;"> </span><span style="color:#CC7832;font-weight:bold;">TABLE</span><span style="color:#A9B7C6;"> IF </span><span style="color:#CC7832;font-weight:bold;">NOT</span><span style="color:#A9B7C6;"> </span><span style="color:#CC7832;font-weight:bold;">EXISTS</span><span style="color:#A9B7C6;">  Veiculos (</span><span style="color:#9AA89A;">&quot;</span><span style="color:#A9B7C6;">+</span></div>
<div class="m" style="left:537px;top:281px;font-size:15px;line-height:18px;"><span style="color:#9AA89A;">&quot;</span><span style="color:#A9B7C6;">id </span><span style="color:#CC7832;font-weight:bold;">INTEGER</span><span style="color:#A9B7C6;"> </span><span style="color:#CC7832;font-weight:bold;">PRIMARY</span><span style="color:#A9B7C6;"> </span><span style="color:#CC7832;font-weight:bold;">KEY</span><span style="color:#A9B7C6;"> AUTOINCREMENT</span><span style="color:#CC7832;">,</span><span style="color:#9AA89A;">&quot;</span><span style="color:#A9B7C6;">+</span></div>
<div style="left:546px;top:279px;width:2px;height:17px;background:#BBBBBB;"></div>
<div class="m" style="left:537px;top:299px;font-size:15px;line-height:18px;"><span style="color:#9AA89A;">&quot;</span><span style="color:#A9B7C6;">marca TEXT</span><span style="color:#CC7832;">,</span><span style="color:#9AA89A;">&quot;</span><span style="color:#A9B7C6;"> +</span></div>
<div class="m" style="left:537px;top:317px;font-size:15px;line-height:18px;"><span style="color:#9AA89A;">&quot;</span><span style="color:#A9B7C6;">modelo TEXT</span><span style="color:#CC7832;">,</span><span style="color:#9AA89A;">&quot;</span><span style="color:#A9B7C6;"> +</span></div>
<div class="m" style="left:537px;top:335px;font-size:15px;line-height:18px;"><span style="color:#9AA89A;">&quot;</span><span style="color:#A9B7C6;">hp </span><span style="color:#CC7832;font-weight:bold;">INTEGER</span><span style="color:#A9B7C6;">)</span><span style="color:#CC7832;">;</span><span style="color:#9AA89A;">&quot;</span><span style="color:#A9B7C6;">)</span><span style="color:#CC7832;">;</span></div>
<div class="m" style="left:465px;top:371px;font-size:15px;line-height:18px;"><span style="color:#A9B7C6;">stm.executeUpdate()</span><span style="color:#CC7832;">;</span></div>
<div class="m" style="left:429px;top:407px;font-size:15px;line-height:18px;"><span style="color:#A9B7C6;">} </span><span style="color:#CC7832;">catch</span><span style="color:#A9B7C6;"> (SQLException e) {</span></div>
<div class="m" style="left:465px;top:425px;font-size:15px;line-height:18px;"><span style="color:#A9B7C6;">e.printStackTrace()</span><span style="color:#CC7832;">;</span></div>
<div class="m" style="left:429px;top:443px;font-size:15px;line-height:18px;"><span style="color:#A9B7C6;">} </span><span style="color:#CC7832;">finally</span><span style="color:#A9B7C6;"> {</span></div>
<div class="m" style="left:465px;top:461px;font-size:15px;line-height:18px;"><span style="color:#A9B7C6;">close()</span><span style="color:#CC7832;">;</span></div>
<div class="m" style="left:429px;top:479px;font-size:15px;line-height:18px;"><span style="color:#A9B7C6;">}</span></div>
<div class="m" style="left:393px;top:515px;font-size:15px;line-height:18px;"><span style="color:#A9B7C6;">}</span></div>
<div class="m" style="left:393px;top:551px;font-size:15px;line-height:18px;"><span style="color:#CC7832;">public</span><span style="color:#A9B7C6;"> </span><span style="color:#CC7832;">void</span><span style="color:#A9B7C6;"> </span><span style="color:#FFC66D;">create</span><span style="color:#A9B7C6;">(Veiculo v){</span></div>
<div class="m" style="left:429px;top:587px;font-size:15px;line-height:18px;"><span style="color:#A9B7C6;">open()</span><span style="color:#CC7832;">;</span></div>
<div class="m" style="left:429px;top:623px;font-size:15px;line-height:18px;"><span style="color:#CC7832;">try</span><span style="color:#A9B7C6;"> {</span></div>
<div class="m" style="left:465px;top:659px;font-size:15px;line-height:18px;"><span style="color:#A9B7C6;">PreparedStatement stm = </span><span style="color:#9876AA;">conn</span><span style="color:#A9B7C6;">.prepareStatement(</span></div>
<div style="left:882px;top:661px;width:30px;height:14px;background:rgba(80,80,80,0.35);border-radius:3px;"></div>
<div class="t" style="left:886.5px;top:658.00px;line-height:16px;font-size:13px;color:#7A7A7A;transform:scaleX(1.0628);transform-origin:0 50%;">sql:</div>
<div class="m" style="left:916px;top:659px;font-size:15px;line-height:18px;"><span style="color:#9AA89A;">&quot;</span><span style="color:#CC7832;font-weight:bold;">INSERT</span><span style="color:#A9B7C6;"> </span><span style="color:#CC7832;font-weight:bold;">INTO</span><span style="color:#A9B7C6;"> Veiculos </span><span style="color:#CC7832;font-weight:bold;">VALUES</span><span style="color:#A9B7C6;"> (?</span><span style="color:#CC7832;">,</span><span style="color:#A9B7C6;">?</span><span style="color:#CC7832;">,</span><span style="color:#A9B7C6;">?</span><span style="color:#CC7832;">,</span><span style="color:#A9B7C6;">?)</span><span style="color:#CC7832;">;</span><span style="color:#9AA89A;">&quot;</span><span style="color:#A9B7C6;">)</span><span style="color:#CC7832;">;</span></div>
<div class="m" style="left:465px;top:677px;font-size:15px;line-height:18px;"><span style="color:#A9B7C6;">stm.setString(</span></div>
<div style="left:594px;top:679px;width:112px;height:14px;background:rgba(80,80,80,0.35);border-radius:3px;"></div>
<div class="t" style="left:598.5px;top:676.00px;line-height:16px;font-size:13px;color:#7A7A7A;transform:scaleX(1.0945);transform-origin:0 50%;">parameterIndex:</div>
<div class="m" style="left:465px;top:695px;font-size:15px;line-height:18px;"><span style="color:#A9B7C6;">stm.setString(</span></div>
<div style="left:594px;top:697px;width:112px;height:14px;background:rgba(80,80,80,0.35);border-radius:3px;"></div>
<div class="t" style="left:598.5px;top:694.00px;line-height:16px;font-size:13px;color:#7A7A7A;transform:scaleX(1.0945);transform-origin:0 50%;">parameterIndex:</div>
<div class="m" style="left:465px;top:713px;font-size:15px;line-height:18px;"><span style="color:#A9B7C6;">stm.setString(</span></div>
<div style="left:594px;top:715px;width:112px;height:14px;background:rgba(80,80,80,0.35);border-radius:3px;"></div>
<div class="t" style="left:598.5px;top:712.00px;line-height:16px;font-size:13px;color:#7A7A7A;transform:scaleX(1.0945);transform-origin:0 50%;">parameterIndex:</div>
<div class="m" style="left:710px;top:677px;font-size:15px;line-height:18px;"><span style="color:#6897BB;">1</span><span style="color:#CC7832;">,</span></div>
<div style="left:738px;top:679px;width:18px;height:14px;background:rgba(80,80,80,0.35);border-radius:3px;"></div>
<div class="t" style="left:742.5px;top:676.00px;line-height:16px;font-size:13px;color:#7A7A7A;transform:scaleX(1.2857);transform-origin:0 50%;">x:</div>
<div class="m" style="left:761px;top:677px;font-size:15px;line-height:18px;"><span style="color:#6897BB;">111</span><span style="color:#A9B7C6;">)</span><span style="color:#CC7832;">;</span></div>
<svg style="position:absolute;left:761px;top:690px;" width="27" height="3" viewBox="0 0 27 3"><polyline points="0,0 2,2 4,0 6,2 8,0 10,2 12,0 14,2 16,0 18,2 20,0 22,2 24,0 26,2" stroke="#BC3F3C" stroke-width="1" fill="none"/></svg>
<div class="m" style="left:710px;top:695px;font-size:15px;line-height:18px;"><span style="color:#6897BB;">2</span><span style="color:#CC7832;">,</span><span style="color:#A9B7C6;">v.getMarca())</span><span style="color:#CC7832;">;</span></div>
<div class="m" style="left:710px;top:713px;font-size:15px;line-height:18px;"><span style="color:#6897BB;">3</span><span style="color:#CC7832;">,</span><span style="color:#A9B7C6;">v.getModelo())</span><span style="color:#CC7832;">;</span></div>
<div class="m" style="left:465px;top:749px;font-size:15px;line-height:18px;"><span style="color:#A9B7C6;">stm.executeUpdate()</span><span style="color:#CC7832;">;</span></div>
<div style="left:1816px;top:270px;width:13px;height:2px;background:#C9A13A;"></div>
<div style="left:1816px;top:276.5px;width:13px;height:2px;background:#C9A13A;"></div>
<div style="left:1816px;top:283px;width:13px;height:2px;background:#C9A13A;"></div>
<div style="left:1816px;top:290px;width:13px;height:2px;background:#C9A13A;"></div>
<div style="left:1816px;top:297px;width:13px;height:2px;background:#C9A13A;"></div>
<div style="left:1816px;top:420px;width:13px;height:2px;background:#C9A13A;"></div>
<div style="left:1816px;top:427px;width:13px;height:2px;background:#B84A47;"></div>
<div style="left:1816px;top:563px;width:13px;height:2px;background:#E1A61F;"></div>
<div style="left:1821px;top:223px;width:8px;height:242px;background:rgba(120,122,124,0.55);"></div>
<div style="left:1817px;top:138px;width:11px;height:11px;border-radius:50%;background:#C75450;"></div>
<div style="left:1822px;top:140px;width:1.5px;height:5px;background:#2B2B2B;"></div>
<div style="left:1822px;top:146px;width:1.5px;height:1.5px;background:#2B2B2B;"></div>
<div style="left:291px;top:781px;width:1538px;height:25px;background:#333537;"></div>
<div class="t" style="left:360.3px;top:783.80px;line-height:20px;font-size:15px;color:#BBBBBB;transform:scaleX(1.0220);transform-origin:0 50%;">VeiculoSQLite</div>
<svg style="position:absolute;left:467px;top:789px;" width="6" height="10" viewBox="0 0 6 10"><path d="M1 1l4 4-4 4" stroke="#6E7072" stroke-width="1" fill="none"/></svg>
<div class="t" style="left:480.7px;top:783.80px;line-height:20px;font-size:15px;color:#BBBBBB;transform:scaleX(1.0200);transform-origin:0 50%;">VeiculoSQLite()</div>
<div style="left:23px;top:806px;width:1806px;height:203px;background:#3F4042;"></div>
<div style="left:23px;top:806px;width:1806px;height:1px;background:#2B2D2F;"></div>
<div style="left:23px;top:832px;width:1806px;height:1px;background:#323436;"></div>
<div class="t" style="left:30px;top:809.80px;line-height:20px;font-size:15px;color:#BBBBBB;transform:scaleX(0.9720);transform-origin:0 50%;">Messages:</div>
<div style="left:108px;top:807px;width:73px;height:25px;background:#363739;"></div>
<div class="t" style="left:120px;top:809.80px;line-height:20px;font-size:15px;color:#BBBBBB;transform:scaleX(1.0643);transform-origin:0 50%;">Build</div>
<svg style="position:absolute;left:162px;top:818px;" width="8" height="8" viewBox="0 0 8 8"><path d="M0.5 0.5l7 7M7.5 0.5l-7 7" stroke="#6E7072" stroke-width="1.2"/></svg>
<svg style="position:absolute;left:1783px;top:812px;" width="14" height="14" viewBox="0 0 14 14"><circle cx="7" cy="7" r="4.8" fill="#AFB1B3"/><path d="M7 0.5v13M0.5 7h13M2.4 2.4l9.2 9.2M11.6 2.4l-9.2 9.2" stroke="#AFB1B3" stroke-width="2.4"/><circle cx="7" cy="7" r="2" fill="#3F4042"/></svg>
<div style="left:1810px;top:818px;width:12px;height:2px;background:#AFB1B3;"></div>
<div style="left:51px;top:833px;width:1px;height:176px;background:#323436;"></div>
<svg style="position:absolute;left:30px;top:842px;" width="14" height="12" viewBox="0 0 14 12"><path d="M0 0l7 6-7 6z" fill="#59A869"/><path d="M7 0l7 6-7 6z" fill="#59A869"/></svg>
<div style="left:33px;top:870px;width:9px;height:9px;background:#5C5F61;"></div>
<div style="left:28px;top:892px;width:18px;height:1px;background:#4A4D4F;"></div>
<svg style="position:absolute;left:30px;top:900px;" width="16" height="16" viewBox="0 0 16 16"><circle cx="6.5" cy="7" r="5.5" fill="#AFB1B3"/><path d="M6.5 1.5v5.5h5" fill="#3F4042"/><circle cx="11.5" cy="11.5" r="3.8" fill="#DB5C5C"/><rect x="9" y="11" width="5" height="1.3" fill="#fff"/></svg>
<div style="left:28px;top:922px;width:18px;height:1px;background:#4A4D4F;"></div>
<svg style="position:absolute;left:30px;top:932px;" width="14" height="15" viewBox="0 0 14 15"><path d="M1.5 13.5l7-7" stroke="#AFB1B3" stroke-width="2.6" stroke-linecap="round"/><path d="M8 4a4 4 0 0 1 5.5-3L11 3.5 12 5l2-2.5A4 4 0 0 1 10 8z" fill="#AFB1B3"/></svg>
<svg style="position:absolute;left:72px;top:837px;" width="13" height="13" viewBox="0 0 13 13"><circle cx="6.5" cy="6.5" r="6.2" fill="#3D93BF"/><rect x="5.4" y="2.2" width="2.2" height="2" fill="#23333B"/><rect x="5.4" y="5.2" width="2.2" height="5.6" fill="#23333B"/></svg>
<div class="t" style="left:91px;top:834.30px;line-height:20px;font-size:15px;color:#BBBBBB;transform:scaleX(1.0293);transform-origin:0 50%;">Information: java: Some messages have been simplified; recompile with -Xdiags:verbose to get full output</div>
<svg style="position:absolute;left:72px;top:857px;" width="13" height="13" viewBox="0 0 13 13"><circle cx="6.5" cy="6.5" r="6.2" fill="#3D93BF"/><rect x="5.4" y="2.2" width="2.2" height="2" fill="#23333B"/><rect x="5.4" y="5.2" width="2.2" height="5.6" fill="#23333B"/></svg>
<div class="t" style="left:91px;top:854.30px;line-height:20px;font-size:15px;color:#BBBBBB;transform:scaleX(1.0349);transform-origin:0 50%;">Information: java: Errors occurred while compiling module &#x27;JavaFX&#x27;</div>
<svg style="position:absolute;left:72px;top:877px;" width="13" height="13" viewBox="0 0 13 13"><circle cx="6.5" cy="6.5" r="6.2" fill="#3D93BF"/><rect x="5.4" y="2.2" width="2.2" height="2" fill="#23333B"/><rect x="5.4" y="5.2" width="2.2" height="5.6" fill="#23333B"/></svg>
<div class="t" style="left:91px;top:874.30px;line-height:20px;font-size:15px;color:#BBBBBB;transform:scaleX(1.0055);transform-origin:0 50%;">Information: javac 1.8.0_151 was used to compile java sources</div>
<svg style="position:absolute;left:72px;top:897px;" width="13" height="13" viewBox="0 0 13 13"><circle cx="6.5" cy="6.5" r="6.2" fill="#3D93BF"/><rect x="5.4" y="2.2" width="2.2" height="2" fill="#23333B"/><rect x="5.4" y="5.2" width="2.2" height="5.6" fill="#23333B"/></svg>
<div class="t" style="left:91px;top:894.30px;line-height:20px;font-size:15px;color:#BBBBBB;transform:scaleX(1.0131);transform-origin:0 50%;">Information: 05/09/18 12:38 - Compilation completed with 1 error and 0 warnings in 2 s 869 ms</div>
<svg style="position:absolute;left:55px;top:919px;" width="9" height="8" viewBox="0 0 9 8"><path d="M0 0h9L4.5 7.5z" fill="#AFB1B3"/></svg>
<svg style="position:absolute;left:71px;top:916px;" width="15" height="14" viewBox="0 0 15 14"><path d="M5 0h4v5H3V2z" fill="#AFB1B3"/><path d="M9 0l3 3v2H9z" fill="#AFB1B3"/><rect x="0" y="7" width="15" height="7" fill="#3592C4"/><path d="M3 8.5v3.5h3" stroke="#103040" stroke-width="1.2" fill="none"/></svg>
<div class="t" style="left:90.3px;top:914.30px;line-height:20px;font-size:15px;color:#BBBBBB;font-weight:bold;-webkit-text-stroke:0;transform:scaleX(1.0447);transform-origin:0 50%;">/home/otavioshiro/JavaFX/src/model/sqlite/VeiculoSQLite.java</div>
<div style="left:52px;top:934px;width:1777px;height:20px;background:#0D293E;"></div>
<svg style="position:absolute;left:90px;top:937px;" width="13" height="13" viewBox="0 0 13 13"><circle cx="6.5" cy="6.5" r="6.2" fill="#C75450"/><rect x="5.4" y="2.5" width="2.2" height="5" fill="#3A1515"/><rect x="5.4" y="8.8" width="2.2" height="2" fill="#3A1515"/></svg>
<div class="t" style="left:108.7px;top:934.30px;line-height:20px;font-size:15px;color:#BBBBBB;transform:scaleX(1.0242);transform-origin:0 50%;">Error:(41, 30)  java: incompatible types: int cannot be converted to java.lang.String</div>
<div style="left:0px;top:1008px;width:1853px;height:1px;background:#2B2D2F;"></div>
<div style="left:268px;top:1009px;width:111px;height:21px;background:#2E2F31;"></div>
<svg style="position:absolute;left:32px;top:1016px;" width="9" height="9" viewBox="0 0 9 9"><path d="M0 0l8.5 4.5L0 9z" fill="#AFB1B3"/></svg>
<div class="t" style="left:46.8px;top:1010.32px;line-height:20px;font-size:13.5px;color:#BBBBBB;transform:scaleX(0.8850);transform-origin:0 50%;"><u>4</u>: Run</div>
<svg style="position:absolute;left:104px;top:1015px;" width="11" height="10" viewBox="0 0 11 10"><path d="M0 1h2M0 5h2M0 9h2" stroke="#AFB1B3" stroke-width="2"/><path d="M3.5 1H11M3.5 5H11M3.5 9H11" stroke="#AFB1B3" stroke-width="2"/></svg>
<div class="t" style="left:119.4px;top:1010.32px;line-height:20px;font-size:13.5px;color:#BBBBBB;transform:scaleX(0.9138);transform-origin:0 50%;"><u>6</u>: TODO</div>
<svg style="position:absolute;left:191px;top:1015px;" width="11" height="10" viewBox="0 0 11 10"><rect x="0" y="0" width="11" height="10" fill="#AFB1B3"/><path d="M2 2.5l2.5 2L2 6.5" stroke="#3F4042" stroke-width="1.1" fill="none"/><path d="M5 8h4" stroke="#3F4042" stroke-width="1"/></svg>
<div class="t" style="left:207.4px;top:1010.32px;line-height:20px;font-size:13.5px;color:#BBBBBB;transform:scaleX(0.9841);transform-origin:0 50%;">Terminal</div>
<svg style="position:absolute;left:280px;top:1016px;" width="12" height="9" viewBox="0 0 12 9"><path d="M0 1h12M0 4.5h8M0 8h12" stroke="#AFB1B3" stroke-width="1.8"/></svg>
<div class="t" style="left:297px;top:1010.32px;line-height:20px;font-size:13.5px;color:#DDDDDD;transform:scaleX(0.9186);transform-origin:0 50%;"><u>0</u>: Messages</div>
<svg style="position:absolute;left:395px;top:1014px;" width="10" height="12" viewBox="0 0 10 12"><path d="M2 3a3 3 0 0 1 6 0v6H2z" fill="#AFB1B3"/><rect x="0" y="9" width="10" height="2.5" fill="#AFB1B3"/></svg>
<div class="t" style="left:410.5px;top:1010.32px;line-height:20px;font-size:13.5px;color:#BBBBBB;transform:scaleX(0.9583);transform-origin:0 50%;">Inspection Results</div>
<svg style="position:absolute;left:1744px;top:1013px;" width="15" height="15" viewBox="0 0 15 15"><path d="M13.5 13.5H7.5A6.2 6.2 0 1 1 13.5 7.5z" stroke="#AFB1B3" stroke-width="1.4" fill="none"/></svg>
<div class="t" style="left:1762.3px;top:1010.32px;line-height:20px;font-size:13.5px;color:#BBBBBB;transform:scaleX(0.9491);transform-origin:0 50%;">Event Log</div>
<div style="left:0px;top:1030px;width:1853px;height:1px;background:#47494B;"></div>
<svg style="position:absolute;left:10px;top:1037px;" width="12" height="12" viewBox="0 0 12 12"><rect x="3" y="0.5" width="8.5" height="8.5" fill="none" stroke="#AFB1B3" stroke-width="1.2"/><path d="M0.6 3v8.4H9" stroke="#AFB1B3" stroke-width="1.2" fill="none"/></svg>
<div class="t" style="left:31.8px;top:1032.40px;line-height:20px;font-size:15px;color:#BBBBBB;transform:scaleX(1.0078);transform-origin:0 50%;">Compilation completed with 1 error and 0 warnings in 2 s 869 ms (17 minutes ago)</div>
<div class="t" style="left:1565.5px;top:1032.20px;line-height:20px;font-size:15px;color:#BBBBBB;transform:scaleX(0.9474);transform-origin:0 50%;">39 chars</div>
<div class="t" style="left:1636.7px;top:1032.20px;line-height:20px;font-size:15px;color:#BBBBBB;transform:scaleX(0.9245);transform-origin:0 50%;">19:22</div>
<div class="t" style="left:1684.4px;top:1032.20px;line-height:20px;font-size:15px;color:#BBBBBB;transform:scaleX(0.8627);transform-origin:0 50%;">LF</div>
<svg style="position:absolute;left:1705px;top:1038px;" width="5" height="10" viewBox="0 0 5 10"><path d="M0 4h5L2.5 0zM0 6h5L2.5 10z" fill="#AFB1B3"/></svg>
<div class="t" style="left:1721.5px;top:1032.20px;line-height:20px;font-size:15px;color:#BBBBBB;transform:scaleX(0.8825);transform-origin:0 50%;">UTF-8</div>
<svg style="position:absolute;left:1766px;top:1038px;" width="5" height="10" viewBox="0 0 5 10"><path d="M0 4h5L2.5 0zM0 6h5L2.5 10z" fill="#AFB1B3"/></svg>
<svg style="position:absolute;left:1783px;top:1037px;" width="12" height="12" viewBox="0 0 12 12"><path d="M1.5 5V3a2.5 2.5 0 0 1 5 0" stroke="#AFB1B3" stroke-width="1.5" fill="none"/><rect x="3" y="6" width="9" height="6" fill="#AFB1B3"/></svg>
<svg style="position:absolute;left:1807px;top:1036px;" width="15" height="14" viewBox="0 0 15 14"><circle cx="6" cy="6" r="4.5" stroke="#7D7F81" stroke-width="2" fill="none" stroke-dasharray="2 1.5"/><text x="9" y="13.5" font-size="10" font-weight="bold" fill="#AFB1B3" font-family="Liberation Sans">?</text></svg>
<svg style="position:absolute;left:1832px;top:1035px;" width="12" height="15" viewBox="0 0 12 15"><circle cx="6" cy="5" r="4.5" stroke="#AFB1B3" stroke-width="1.2" fill="none"/><path d="M2 9v5h8V9" stroke="#AFB1B3" stroke-width="1.2" fill="none"/><path d="M3 5h6" stroke="#AFB1B3"/></svg>
</body></html>
